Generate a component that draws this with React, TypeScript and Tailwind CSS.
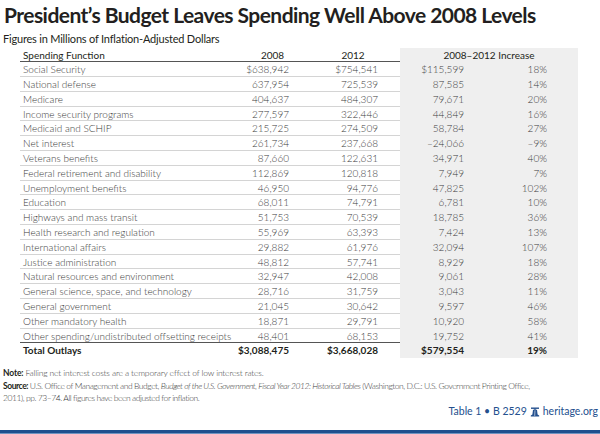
import React from "react"

type Row = {
  label: string
  y2008: string
  y2012: string
  amount: string
  pct: string
}

const rows: Row[] = [
  { label: "Social Security", y2008: "$638,942", y2012: "$754,541", amount: "$115,599", pct: "18%" },
  { label: "National defense", y2008: "637,954", y2012: "725,539", amount: "87,585", pct: "14%" },
  { label: "Medicare", y2008: "404,637", y2012: "484,307", amount: "79,671", pct: "20%" },
  { label: "Income security programs", y2008: "277,597", y2012: "322,446", amount: "44,849", pct: "16%" },
  { label: "Medicaid and SCHIP", y2008: "215,725", y2012: "274,509", amount: "58,784", pct: "27%" },
  { label: "Net interest", y2008: "261,734", y2012: "237,668", amount: "–24,066", pct: "–9%" },
  { label: "Veterans benefits", y2008: "87,660", y2012: "122,631", amount: "34,971", pct: "40%" },
  { label: "Federal retirement and disability", y2008: "112,869", y2012: "120,818", amount: "7,949", pct: "7%" },
  { label: "Unemployment benefits", y2008: "46,950", y2012: "94,776", amount: "47,825", pct: "102%" },
  { label: "Education", y2008: "68,011", y2012: "74,791", amount: "6,781", pct: "10%" },
  { label: "Highways and mass transit", y2008: "51,753", y2012: "70,539", amount: "18,785", pct: "36%" },
  { label: "Health research and regulation", y2008: "55,969", y2012: "63,393", amount: "7,424", pct: "13%" },
  { label: "International affairs", y2008: "29,882", y2012: "61,976", amount: "32,094", pct: "107%" },
  { label: "Justice administration", y2008: "48,812", y2012: "57,741", amount: "8,929", pct: "18%" },
  { label: "Natural resources and environment", y2008: "32,947", y2012: "42,008", amount: "9,061", pct: "28%" },
  { label: "General science, space, and technology", y2008: "28,716", y2012: "31,759", amount: "3,043", pct: "11%" },
  { label: "General government", y2008: "21,045", y2012: "30,642", amount: "9,597", pct: "46%" },
  { label: "Other mandatory health", y2008: "18,871", y2012: "29,791", amount: "10,920", pct: "58%" },
  { label: "Other spending/undistributed offsetting receipts", y2008: "48,401", y2012: "68,153", amount: "19,752", pct: "41%" },
]

const grid = "grid grid-cols-[205px_85px_90px_89px_89px]"

function LibertyBell() {
  return (
    <svg width="10" height="10" viewBox="0 0 10 10" className="inline-block mx-[3px] -mt-[2px] align-middle">
      <rect x="1" y="0.5" width="8" height="1.4" fill="#24508e" />
      <rect x="4.2" y="1.5" width="1.6" height="1.3" fill="#24508e" />
      <path d="M3 2.8 H7 L7.6 7.4 L9.2 8.6 V9.5 H0.8 V8.6 L2.4 7.4 Z" fill="#24508e" />
      <path d="M5 3.4 L4.7 8.9" stroke="#fff" strokeWidth="0.6" />
    </svg>
  )
}

export default function App() {
  return (
    <div className="w-[600px] h-[434px] bg-white overflow-hidden flex flex-col font-['Lato',sans-serif] text-[#231f20]">
      <h1 className="pl-[4px] pt-[3px] h-[31px] text-[21px] leading-[24px] font-bold tracking-[-0.55px] whitespace-nowrap">
        President’s Budget Leaves Spending Well Above 2008 Levels
      </h1>
      <div className="pl-[3px] pt-[2px] text-[11px] leading-[13px] font-normal tracking-[-0.2px]">
        Figures in Millions of Inflation-Adjusted Dollars
      </div>

      <div className="ml-[20px] w-[558px] mt-[3px] text-[10px]">
        <div className={`${grid} h-[14px] items-center border-b border-[#555] text-[#231f20]`}>
          <div className="pl-[3px]">Spending Function</div>
          <div className="text-center pl-[10px]">2008</div>
          <div className="text-center pr-[4px]">2012</div>
          <div className="col-span-2 text-center bg-[#efefef] h-full flex items-center justify-center">
            2008–2012 Increase
          </div>
        </div>
        {rows.map((r, i) => (
          <div
            key={r.label}
            className={`${grid} h-[14.8px] items-center border-b ${
              i === rows.length - 1 ? "border-[#555]" : "border-[#d4d4d4]"
            } font-light text-[#3c3c3c]`}
          >
            <div className="pl-[3px] whitespace-nowrap">{r.label}</div>
            <div className="text-right pr-[21px]">{r.y2008}</div>
            <div className="text-right pr-[22px]">{r.y2012}</div>
            <div className="text-right pr-[25px] bg-[#efefef] h-full flex items-center justify-end">{r.amount}</div>
            <div className="text-right pr-[31px] bg-[#efefef] h-full flex items-center justify-end">{r.pct}</div>
          </div>
        ))}
        <div className={`${grid} h-[15px] items-center font-bold text-[#231f20]`}>
          <div className="pl-[3px]">Total Outlays</div>
          <div className="text-right pr-[21px]">$3,088,475</div>
          <div className="text-right pr-[22px]">$3,668,028</div>
          <div className="bg-[#efefef] h-full flex items-center justify-end pr-[25px]">$579,554</div>
          <div className="bg-[#efefef] h-full flex items-center justify-end pr-[31px]">19%</div>
        </div>
      </div>

      <div className="pl-[3px] mt-[9px] text-[8.5px] leading-[12px] font-light text-[#3c3c3c] tracking-[-0.15px]">
        <p>
          <span className="font-bold text-[#231f20]">Note:</span> Falling net interest costs are a temporary effect of low
          interest rates.
        </p>
        <p className="mt-[1px] whitespace-nowrap tracking-[-0.45px]">
          <span className="font-bold text-[#231f20]">Source:</span> U.S. Office of Management and Budget,{" "}
          <i>Budget of the U.S. Government, Fiscal Year 2012: Historical Tables</i> (Washington, D.C.: U.S. Government
          Printing Office,
          <br />
          2011), pp. 73–74. All figures have been adjusted for inflation.
        </p>
      </div>

      <div className="mt-auto pr-[2px] pb-[10px] text-right text-[10.5px] text-[#24508e] whitespace-nowrap">
        Table 1 • B 2529
        <LibertyBell />
        heritage.org
      </div>
      <div className="h-[3px] bg-[#1f4f8e]" />
      <div className="h-[1px] bg-[#6f93c0]" />
    </div>
  )
}
